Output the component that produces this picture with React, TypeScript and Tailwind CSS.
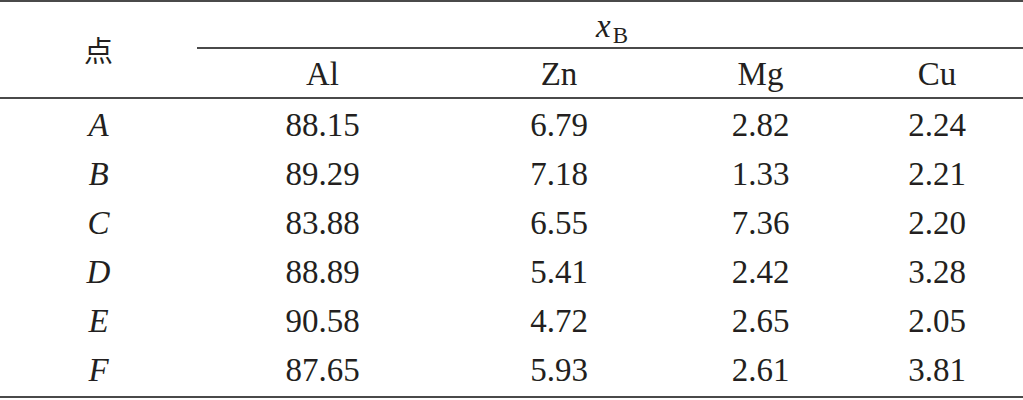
import React from 'react'

const ELEMENTS = ['Al', 'Zn', 'Mg', 'Cu']

const ROWS: { point: string; values: string[] }[] = [
  { point: 'A', values: ['88.15', '6.79', '2.82', '2.24'] },
  { point: 'B', values: ['89.29', '7.18', '1.33', '2.21'] },
  { point: 'C', values: ['83.88', '6.55', '7.36', '2.20'] },
  { point: 'D', values: ['88.89', '5.41', '2.42', '3.28'] },
  { point: 'E', values: ['90.58', '4.72', '2.65', '2.05'] },
  { point: 'F', values: ['87.65', '5.93', '2.61', '3.81'] },
]

const App: React.FC = () => {
  return (
    <div className="w-[1023px] h-[400px] bg-white overflow-hidden">
      <div className="[font-family:'Liberation_Serif','Times_New_Roman',serif] text-[33px] text-[#231f20] leading-[46px]">
        {/* header */}
        <div className="flex border-t-2 border-b-2 border-[#4a4a4a]">
          <div className="w-[197px] flex items-center justify-center">
            <span className="[font-family:'Noto_Sans_CJK_SC',sans-serif] text-[29px] leading-none">点</span>
          </div>
          <div className="flex-1 flex flex-col">
            <div className="h-[47px] pt-[1px] text-center border-b-2 border-[#4a4a4a] pl-[4px]">
              <span className="italic">x</span>
              <span className="text-[23px] relative top-[6px] ml-[2px]">B</span>
            </div>
            <div className="grid grid-cols-[251px_222px_181px_172px] h-[48px]">
              {ELEMENTS.map((el) => (
                <div key={el} className="pt-[2px] text-center">{el}</div>
              ))}
            </div>
          </div>
        </div>

        {/* body */}
        <div className="pb-[3px] border-b-2 border-[#4a4a4a]">
          {ROWS.map((row) => (
            <div key={row.point} className="grid grid-cols-[197px_251px_222px_181px_172px] h-[49px]">
              <div className="pt-[3px] text-center italic">{row.point}</div>
              {row.values.map((v, i) => (
                <div key={i} className="pt-[3px] text-center">{v}</div>
              ))}
            </div>
          ))}
        </div>
      </div>
    </div>
  )
}

export default App
